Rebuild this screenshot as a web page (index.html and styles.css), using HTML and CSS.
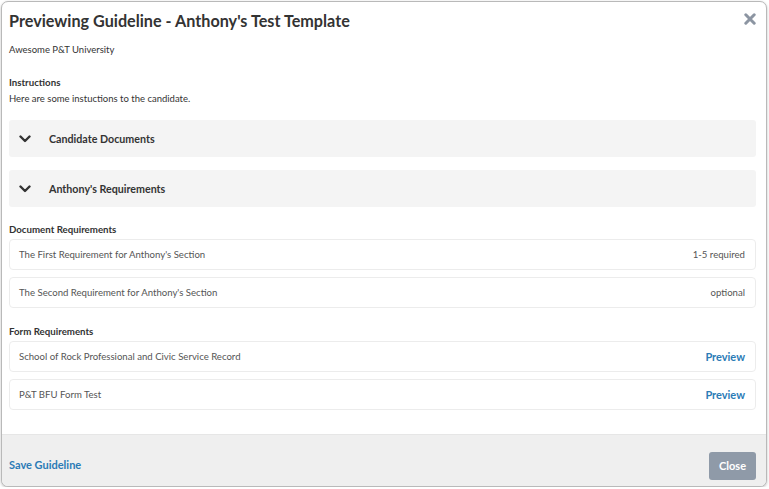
FILE: index.html
```html
<!DOCTYPE html>
<html>
<head>
<meta charset="utf-8">
<link rel="stylesheet" href="styles.css">
</head>
<body>
<div class="modal">
  <div class="modal-body">
    <div class="header">
      <h1 class="title">Previewing Guideline - Anthony's Test Template</h1>
      <svg class="close-x" width="12" height="12" viewBox="0 0 12 12"><path d="M1.8 1.8 L10.2 10.2 M10.2 1.8 L1.8 10.2" stroke="#8c95a2" stroke-width="3" stroke-linecap="round"/></svg>
    </div>
    <p class="org">Awesome P&amp;T University</p>
    <p class="label label-instr">Instructions</p>
    <p class="text">Here are some instuctions to the candidate.</p>

    <div class="accordion acc-first">
      <svg class="chev" width="12" height="8" viewBox="0 0 12 8"><path d="M1.5 1.5 L6 6 L10.5 1.5" fill="none" stroke="#333" stroke-width="2.4" stroke-linecap="round" stroke-linejoin="round"/></svg>
      <span class="acc-title">Candidate Documents</span>
    </div>
    <div class="accordion acc-second">
      <svg class="chev" width="12" height="8" viewBox="0 0 12 8"><path d="M1.5 1.5 L6 6 L10.5 1.5" fill="none" stroke="#333" stroke-width="2.4" stroke-linecap="round" stroke-linejoin="round"/></svg>
      <span class="acc-title">Anthony's Requirements</span>
    </div>

    <p class="label section-label">Document Requirements</p>
    <div class="row row-first">
      <span class="row-text">The First Requirement for Anthony's Section</span>
      <span class="row-meta">1-5 required</span>
    </div>
    <div class="row">
      <span class="row-text">The Second Requirement for Anthony's Section</span>
      <span class="row-meta">optional</span>
    </div>

    <p class="label section-label section-label-2">Form Requirements</p>
    <div class="row row-first">
      <span class="row-text">School of Rock Professional and Civic Service Record</span>
      <a class="link">Preview</a>
    </div>
    <div class="row">
      <span class="row-text">P&amp;T BFU Form Test</span>
      <a class="link">Preview</a>
    </div>
  </div>
  <div class="footer">
    <a class="save">Save Guideline</a>
    <button class="btn-close">Close</button>
  </div>
</div>
</body>
</html>
```

FILE: styles.css
```css
html, body {
  margin: 0;
  padding: 0;
  background: #ffffff;
}
body {
  font-family: Lato, "Noto Sans", sans-serif;
  color: #333;
}
.modal {
  box-sizing: border-box;
  margin: 1px 0 0 1px;
  width: 766px;
  height: 486px;
  border: 1px solid #b9b9b9;
  border-radius: 7px;
  box-shadow: 0 1px 3px rgba(0,0,0,0.25);
  display: flex;
  flex-direction: column;
  overflow: hidden;
  background: #fff;
}
.modal-body {
  flex: 1;
  padding: 0 10px 0 7px;
}
.header {
  display: flex;
  justify-content: space-between;
  align-items: flex-start;
  padding-top: 8px;
}
.title {
  margin: 0;
  font-family: Lato, "Open Sans", sans-serif;
  font-weight: 700;
  font-size: 16.2px;
  line-height: 22px;
  color: #333;
}
.close-x {
  margin-top: 3px;
  margin-right: 0;
}
p {
  margin: 0;
}
.org {
  margin-top: 11px;
  font-size: 9.5px;
  line-height: 14px;
  color: #333;
}
.label {
  font-size: 9.7px;
  line-height: 14px;
  font-weight: 700;
  color: #333;
}
.label-instr {
  margin-top: 18px;
}
.text {
  margin-top: 3px;
  font-size: 9.5px;
  line-height: 14px;
  color: #333;
}
.accordion {
  height: 37px;
  background: #f4f4f4;
  border-radius: 3px;
  display: flex;
  align-items: center;
  padding-left: 10px;
}
.acc-first {
  margin-top: 14px;
}
.acc-second {
  margin-top: 13px;
}
.chev {
  margin-top: 1px;
}
.acc-title {
  margin-left: 18px;
  font-size: 10.7px;
  font-weight: 700;
  color: #333;
}
.section-label {
  margin-top: 15px;
}
.section-label-2 {
  margin-top: 16px;
}
.row {
  box-sizing: border-box;
  height: 31px;
  margin-top: 7px;
  border: 1px solid #ececec;
  border-radius: 4px;
  display: flex;
  justify-content: space-between;
  align-items: center;
  padding: 0 10px 0 9px;
  font-size: 9.6px;
}
.row-first {
  margin-top: 3px;
}
.row-text {
  color: #555;
}
.row-meta {
  color: #555;
}
.link {
  color: #2b7bb6;
  font-weight: 700;
  font-size: 11px;
}
.footer {
  box-sizing: border-box;
  height: 52px;
  background: #efefef;
  border-top: 1px solid #e6e6e6;
  display: flex;
  justify-content: space-between;
  align-items: center;
  padding: 15px 10px 5px 7px;
}
.save {
  color: #2b7bb6;
  font-weight: 700;
  font-size: 11px;
  margin-bottom: 3px;
}
.btn-close {
  width: 47px;
  height: 28px;
  border: none;
  border-radius: 3px;
  background: #8f9aa8;
  color: #fff;
  font-family: Lato, sans-serif;
  font-weight: 700;
  font-size: 11px;
  line-height: 28px;
  padding: 0;
}
```
